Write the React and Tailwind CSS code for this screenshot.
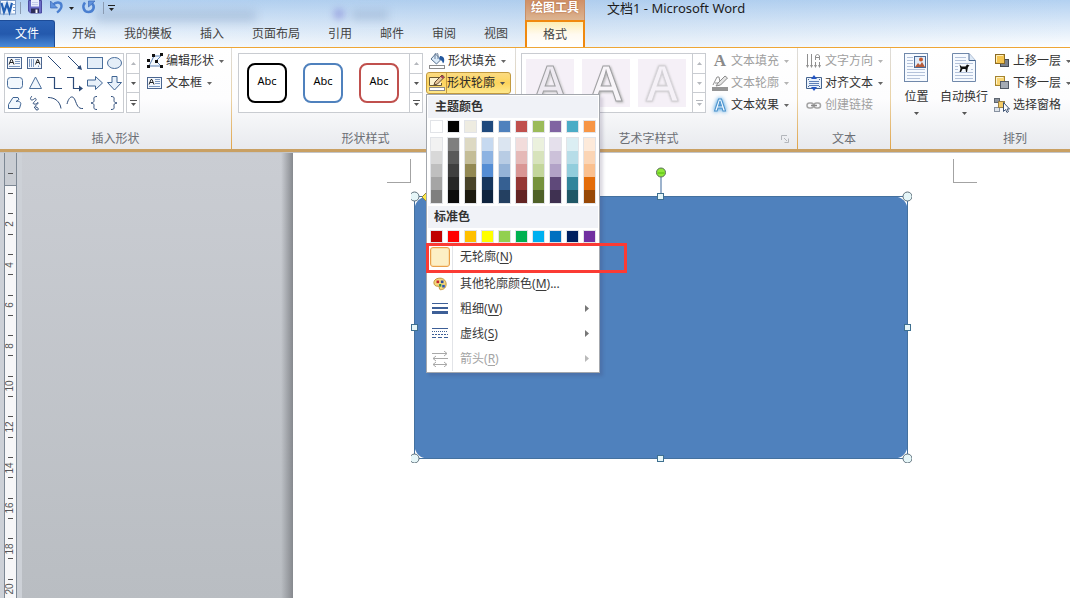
import React from "react";

const INK = "#2b4a78";

function Caret({ className = "text-[#555555]" }) {
  return (
    <svg viewBox="0 0 5 3" className={`h-[3px] w-[5px] shrink-0 ${className}`} aria-hidden="true">
      <path d="M0 0h5L2.500 3z" fill="currentColor" />
    </svg>
  );
}

function Icon({ size = "size-4", box = "0 0 16 16", children }) {
  return (
    <svg viewBox={box} className={`${size} shrink-0`} fill="none" aria-hidden="true">
      {children}
    </svg>
  );
}

/* ---------- title bar icons ---------- */

const WordLogo = () => (
  <Icon>
    <rect x=".5" y=".5" width="15" height="13.500" fill="#fbfdff" stroke="#7f9dc8" />
    <path d="M1 2h11v11H1z" fill="#dbe8f8" />
    <path d="M1.500 3l2.500 9L7 4l2.500 8L12 3" stroke="#2360b4" strokeWidth="2.200" />
    <path d="M13 4.500h2M13 7.500h2M13 10.500h2" stroke="#7ba0d0" />
  </Icon>
);

const SaveIcon = () => (
  <Icon>
    <path d="M1.500 .5h13V13h-11l-2-2z" fill="#6a6cc6" stroke="#4a4aa0" />
    <rect x="4" y="0" width="8" height="6.500" fill="#e9eefb" />
    <path d="M5 2.500h6M5 4.500h6" stroke="#c4cdea" />
    <rect x="4" y="8.500" width="8" height="4.500" fill="#2c2c58" />
    <rect x="8.500" y="9.500" width="2" height="3.500" fill="#fff" />
  </Icon>
);

const UndoIcon = () => (
  <Icon>
    <path d="M4 5C6.500 1.500 12.500 1.500 12.500 6c0 3-2 4.500-4.500 6.500" stroke="#4a7fd0" strokeWidth="2.400" />
    <path d="M1.500 1v7h7z" fill="#5f92de" stroke="#3a68b8" strokeWidth=".7" />
  </Icon>
);

const RedoIcon = () => (
  <Icon>
    <path d="M4 2.500C1 6 2.500 12 7.500 12c5.500 0 6.500-6 3.500-8.500" stroke="#4a7fd0" strokeWidth="2.600" />
    <path d="M7.500 7V1H14z" fill="#5f92de" stroke="#3a68b8" strokeWidth=".7" />
  </Icon>
);

/* ---------- shape gallery ---------- */

const shapes = [
  ["文本框", <g key="s"><rect x="3.500" y="4.500" width="14" height="11" fill="#f4f8fd" stroke="#4b6690" /><path d="M5 11.500l2-5h1l2 5M6 9.500h3" stroke="#222" /><path d="M11 6.500h5M11 8.500h5M11 10.500h5M5 13.500h11" stroke="#7c98c0" /></g>],
  ["竖排文本框", <g key="s"><rect x="3.500" y="4.500" width="14" height="11" fill="#f4f8fd" stroke="#4b6690" /><path d="M5.500 6v8M7.500 6v8M9.500 6v8M14.500 12.500V14" stroke="#7c98c0" /><path d="M11.500 11.500l2-5h.5l2 5M12 9.500h3" stroke="#222" /></g>],
  ["直线", <path key="s" d="M4 3l13 13" stroke={INK} />],
  ["箭头", <g key="s"><path d="M4 3l12 12" stroke={INK} /><path d="M18 17l-5-1.500 3.500-3.500z" fill={INK} /></g>],
  ["矩形", <rect key="s" x="3.500" y="4.500" width="15" height="11" fill="#e4eef8" stroke="#4b6f9c" />],
  ["椭圆", <ellipse key="s" cx="10.500" cy="10" rx="7" ry="5.500" fill="#e4eef8" stroke="#4b6f9c" />],
  ["圆角矩形", <rect key="s" x="3.500" y="4.500" width="15" height="11" rx="3" fill="#f1f7fd" stroke="#4b6f9c" />],
  ["三角形", <path key="s" d="M11.500 4L17.500 15.500h-12z" fill="#f1f7fd" stroke="#4b6f9c" />],
  ["肘形连接符", <path key="s" d="M3 4.500h7.500v11H18" stroke={INK} strokeWidth="1.200" />],
  ["肘形箭头连接符", <g key="s"><path d="M3 4.500h6.500v11H16" stroke={INK} strokeWidth="1.200" /><path d="M15 12.500l4 3-4 3z" fill={INK} /></g>],
  ["右箭头", <path key="s" d="M3.500 7h8V3.500l7 6.500-7 6.500V13h-8z" fill="#e8f1fa" stroke="#3f6493" />],
  ["下箭头", <path key="s" d="M8 3.500h5v6h4.500L10.500 17 3.500 9.500H8z" fill="#e8f1fa" stroke="#3f6493" />],
  ["任意多边形", <path key="s" d="M9 4.500h5l1 2-3 2c4-.5 5.500 1 4.500 3.500l-1 3.500h-11v-4z" fill="#f1f7fd" stroke="#3f6493" />],
  ["自由曲线", <path key="s" d="M8 3c-2 2-2 4 0 4s3-3 4-1-5 4-2 5 4-3 4-1-5 3-2 4 3 3 1 3-1-2-3-3" stroke={INK} />],
  ["弧形", <path key="s" d="M4 4.500c7 0 12 4 13 11" stroke={INK} />],
  ["曲线", <path key="s" d="M3 11c2-8 6-9 8-4s3 9 8 8.500" stroke={INK} />],
  ["左大括号", <path key="s" d="M13 3.500c-4 0-3 2-3 4 0 1.500-1 2.500-3 2.500 2 0 3 1 3 2.500 0 2-1 4 3 4" stroke={INK} />],
  ["右大括号", <path key="s" d="M7 3.500c4 0 3 2 3 4 0 1.500 1 2.500 3 2.500-2 0-3 1-3 2.500 0 2 1 4-3 4" stroke={INK} />],
];

/* ---------- ribbon icons ---------- */

const EditShapeIcon = () => (
  <Icon>
    <path d="M7 3h7l-5 5 5 5H2z" fill="#f3f8fd" stroke="#5b80b4" />
    <path d="M0 12h3v3H0zM5 1h3v3H5zM13 0h3v3h-3zM8 7h3v3H8zM13 12h3v3h-3zM0 6h3v3H0z" fill="#111" />
  </Icon>
);
const TextBoxIcon = () => (
  <Icon>
    <rect x=".5" y="2.500" width="14" height="11" fill="#f4f8fd" stroke="#4b6690" />
    <path d="M2 9.500l2-5h1l2 5M3 7.500h3" stroke="#222" />
    <path d="M8 4.500h5M8 6.500h5M8 8.500h5M2 11.500h11" stroke="#7c98c0" />
  </Icon>
);
const FillIcon = () => (
  <Icon>
    <path d="M6.500 1L12 6.500 7.500 11 2 6z" fill="#dcebf9" stroke="#58718e" />
    <path d="M6 6V1.500Q6 0 7.500 0T9 2v4" stroke="#677d98" />
    <path d="M11 3c3 0 5 2 4 6l-1 1.500c-1-3-2-4-4-4z" fill="#23589f" />
    <rect x=".5" y="12.500" width="15" height="3" fill="#fff" stroke="#8c8c8c" />
  </Icon>
);
const OutlineIcon = () => (
  <Icon>
    <path d="M10 2.500H.5v8h12V8" fill="#fdf3cf" stroke="#6b5a35" />
    <path d="M5 10l1-3 7-7 2.500 2-7 7z" fill="#e7c79a" stroke="#5e4930" />
    <path d="M12 1l2.500 2" stroke="#a73f55" strokeWidth="2" />
    <rect x=".5" y="12.500" width="15" height="3" fill="#fff" stroke="#8c8c8c" />
  </Icon>
);
const TextFillIcon = () => (
  <span className="w-4 shrink-0 text-center font-['Liberation_Serif',serif] text-[17px] leading-4 font-bold text-[#8a8a8a]">A</span>
);
const TextOutlineIcon = () => (
  <Icon>
    <path d="M1 10l4-8h2l1 5M3 8h4" stroke="#909090" />
    <path d="M4 11l2-3 7-7 2.500 2-7 7z" fill="#e4e4e4" stroke="#8a8a8a" />
    <rect x="0" y="12" width="16" height="4" fill="#949494" />
  </Icon>
);
const TextEffectIcon = () => (
  <span className="w-4 shrink-0 text-center text-[16px] leading-4 font-bold text-[#eef7ff] drop-shadow-[0_0_2px_#2d93dd] [-webkit-text-stroke:1px_#4b92cb]">A</span>
);
const DirectionIcon = () => (
  <Icon>
    <path d="M1.500 1v11M5.500 1v11M9.500 7V3l2-2 2 2v4M9.500 4.500h4M9.500 9v5M13.500 9v5" stroke="#8f8f8f" />
    <path d="M0 12h3l-1.500 3zM4 12h3l-1.500 3zM8 12h3l-1.500 3zM12 12h3l-1.500 3z" fill="#8f8f8f" />
  </Icon>
);
const AlignIcon = () => (
  <Icon>
    <path d="M.5 2.500h15v11H.5z" fill="#e9f1fb" stroke="#46648f" />
    <path d="M2 4.500h1M2 11.500h1M13 4.500h1M13 11.500h1" stroke="#46648f" />
    <path d="M3 6.500h10M3 8.500h10M3 10.500h10" stroke="#5d80b8" />
    <path d="M5 4L8 0l3 4zM5 12L8 16l3-4z" fill="#2456c4" />
  </Icon>
);
const LinkIcon = () => (
  <Icon>
    <rect x="1" y="6" width="6.500" height="5" rx="2.500" stroke="#a5a5a5" strokeWidth="1.500" />
    <rect x="8" y="6" width="6.500" height="5" rx="2.500" stroke="#a5a5a5" strokeWidth="1.500" />
    <path d="M5 8.500h6" stroke="#8a8a8a" strokeWidth="1.500" />
  </Icon>
);
const ForwardIcon = () => (
  <Icon>
    <rect x="6.500" y="6.500" width="8" height="7" fill="#7b828d" stroke="#454b55" />
    <rect x="1.500" y="1.500" width="9" height="9" fill="#f5c551" stroke="#8a6a25" />
    <path d="M2.500 9V2.500H9" stroke="#fff0bd" />
  </Icon>
);
const BackwardIcon = () => (
  <Icon>
    <rect x="1.500" y="1.500" width="9" height="9" fill="#f8d576" stroke="#a5842f" />
    <path d="M2.500 9V2.500H9" stroke="#fff4cf" />
    <rect x="6.500" y="6.500" width="8" height="7" fill="#a5abb4" stroke="#525964" />
  </Icon>
);
const SelectPaneIcon = () => (
  <Icon>
    <rect x=".5" y="1.500" width="5" height="4" fill="#8d949e" stroke="#5f6670" />
    <rect x=".5" y="10.500" width="5" height="4" fill="#dfe4ea" stroke="#8791a0" />
    <rect x="4.500" y="4.500" width="6" height="6" fill="#f5cc68" stroke="#9c8142" />
    <path d="M9.500 5.500v9l2-2 1.500 3 1.500-1-1.500-2.500h2.500z" fill="#fff" stroke="#3c5273" />
  </Icon>
);
const PositionIcon = () => (
  <Icon size="h-[30px] w-[25px]" box="0 0 25 30">
    <rect x=".5" y=".5" width="23" height="28" fill="#f6faff" stroke="#7088aa" />
    <path d="M3 4.500h6M3 7.500h6M3 10.500h6M3 13.500h6M3 16.500h18M3 19.500h18M3 22.500h18M3 25.500h13" stroke="#b4c2da" />
    <rect x="10.500" y="3.500" width="11" height="11" fill="#e1ecf9" stroke="#4c6a96" />
    <circle cx="17" cy="6.500" r="2" fill="#c5582c" />
    <path d="M11 14l3-4 2 2 2-3 3 5z" fill="#b65c3b" />
  </Icon>
);
const WrapIcon = () => (
  <Icon size="h-[30px] w-[25px]" box="0 0 25 30">
    <path d="M.5.500H17l6.500 7v21H.5z" fill="#f6faff" stroke="#7088aa" />
    <path d="M17 .500v7h6.500" fill="#dce8f6" stroke="#46658f" />
    <path d="M3 4.500h11M3 7.500h11M3 10.500h18M3 13.500h3M3 16.500h3M3 19.500h18M3 22.500h18M3 25.500h18M19 16.500h2" stroke="#b4c2da" />
    <path d="M7.500 11.500l2 2h4l1.500-2 2.500 1-1.500 1.500-1 5h-1l-.5-3h-3L9 19H7.500l1-3.500z" fill="#111" />
  </Icon>
);

/* ---------- ribbon building blocks ---------- */

function Group({ label, launcher, width, last, children }) {
  return (
    <section className={`flex shrink-0 flex-col ${width}`}>
      <div className="flex flex-1">
        <div className="flex min-w-0 flex-1 flex-col">
          <div className="flex h-20">{children}</div>
          <div className="flex h-[21px] items-center text-[#6c6f75]">
            <h2 className="flex-1 text-center">{label}</h2>
            {launcher && (
              <button type="button" aria-label={`${label}选项`} className="w-4">
                <Icon size="size-2" box="0 0 8 8">
                  <path d="M.5 5V.500H6M3 3l3 3M7.500 3.500v4h-4" stroke="#b3b6bb" />
                </Icon>
              </button>
            )}
          </div>
        </div>
        {!last && <div className="w-px bg-linear-to-b from-[#dcdcdc] via-[#ead3a6] to-[#e0a446]" />}
      </div>
    </section>
  );
}

function RibbonButton({ icon, label, caret = true, disabled }) {
  return (
    <button type="button" disabled={disabled} className={`flex h-[22px] items-center whitespace-nowrap ${disabled ? "text-[#9f9f9f]" : "text-[#333333]"}`}>
      {icon}
      <span className="ml-[3px]">{label}</span>
      {caret && <Caret className={disabled ? "ml-[5px] text-[#b4b4b4]" : "ml-[5px] text-[#666666]"} />}
    </button>
  );
}

function GalleryScroll({ faded }) {
  const tone = faded ? "text-[#b5b8bd]" : "text-[#555555]";
  return (
    <div className="flex w-[14px] flex-col divide-y divide-[#c9ccd1] border border-[#c9ccd1] bg-white">
      <button type="button" aria-label="上一行" className="flex flex-1 items-center justify-center">
        <Caret className="rotate-180 text-[#b5b8bd]" />
      </button>
      <button type="button" aria-label="下一行" className="flex flex-1 items-center justify-center">
        <Caret className={tone} />
      </button>
      <button type="button" aria-label="其他" className={`flex flex-1 flex-col items-center justify-center gap-0.5 ${tone}`}>
        <span className="h-px w-[7px] bg-current" />
        <Caret className={tone} />
      </button>
    </div>
  );
}

/* ---------- outline menu ---------- */

const themeColors = [
  ["bg-[#ffffff]", ["bg-[#f2f2f2]", "bg-[#d8d8d8]", "bg-[#bfbfbf]", "bg-[#a5a5a5]", "bg-[#7f7f7f]"]],
  ["bg-[#000000]", ["bg-[#7f7f7f]", "bg-[#595959]", "bg-[#3f3f3f]", "bg-[#262626]", "bg-[#0c0c0c]"]],
  ["bg-[#eeece1]", ["bg-[#ddd9c3]", "bg-[#c4bd97]", "bg-[#938953]", "bg-[#494429]", "bg-[#1d1b10]"]],
  ["bg-[#1f497d]", ["bg-[#c6d9f0]", "bg-[#8db3e2]", "bg-[#548dd4]", "bg-[#17365d]", "bg-[#0f243e]"]],
  ["bg-[#4f81bd]", ["bg-[#dbe5f1]", "bg-[#b8cce4]", "bg-[#95b3d7]", "bg-[#366092]", "bg-[#244061]"]],
  ["bg-[#c0504d]", ["bg-[#f2dcdb]", "bg-[#e5b9b7]", "bg-[#d99694]", "bg-[#953734]", "bg-[#632423]"]],
  ["bg-[#9bbb59]", ["bg-[#ebf1dd]", "bg-[#d7e3bc]", "bg-[#c3d69b]", "bg-[#76923c]", "bg-[#4f6128]"]],
  ["bg-[#8064a2]", ["bg-[#e5e0ec]", "bg-[#ccc1d9]", "bg-[#b2a2c7]", "bg-[#5f497a]", "bg-[#3f3151]"]],
  ["bg-[#4bacc6]", ["bg-[#dbeef3]", "bg-[#b7dde8]", "bg-[#92cddc]", "bg-[#31859b]", "bg-[#205867]"]],
  ["bg-[#f79646]", ["bg-[#fdeada]", "bg-[#fbd5b5]", "bg-[#fac08f]", "bg-[#e36c09]", "bg-[#974806]"]],
];
const standardColors = ["bg-[#c00000]", "bg-[#ff0000]", "bg-[#ffc000]", "bg-[#ffff00]", "bg-[#92d050]", "bg-[#00b050]", "bg-[#00b0f0]", "bg-[#0070c0]", "bg-[#002060]", "bg-[#7030a0]"];

const PaletteIcon = () => (
  <Icon size="size-[14px]">
    <path d="M6 1.500c5-1 9 2 9 6.500 0 4.500-3 6.500-6.500 6.500C6.500 14.500 8 11 6 10.500 3 11 1 9 1 6.500S3 2 6 1.500z" fill="#f5d77c" stroke="#b98a2c" />
    <path d="M4 4h3v3H4z" fill="#c5232e" />
    <path d="M9 4h3v3H9z" fill="#2c4c9e" />
    <path d="M7 8h2.500v3H7z" fill="#2a8e45" />
    <path d="M10.500 9h3v3h-3z" fill="#2f55b5" />
  </Icon>
);
const WeightIcon = () => (
  <Icon>
    <path d="M0 2.500h16" stroke="#3d5f97" />
    <path d="M0 7h16" stroke="#3d5f97" strokeWidth="2" />
    <path d="M0 11.500h16" stroke="#3d5f97" strokeWidth="3" />
  </Icon>
);
const DashIcon = () => (
  <Icon>
    <path d="M0 2.500h16" stroke="#3d5f97" />
    <path d="M0 5.500h16" stroke="#3d5f97" strokeDasharray="1 1" />
    <path d="M0 8.500h16" stroke="#3d5f97" strokeDasharray="2 1" />
    <path d="M0 11.500h16" stroke="#3d5f97" strokeDasharray="4 2" />
  </Icon>
);
const ArrowsIcon = () => (
  <Icon>
    <path d="M0 2.500h15M12 0l3 2.500L12 5M16 7.500H1M4 5L1 7.500 4 10M1 13.500h14M4 11l-3 2.500L4 16M12 11l3 2.500-3 2.500" stroke="#a8a8a8" />
  </Icon>
);

function MenuItem({ icon, text, accel, tail = "", sub, disabled, height = "h-[25px]" }) {
  return (
    <button type="button" role="menuitem" disabled={disabled} className={`flex w-full ${height} items-stretch text-left ${disabled ? "text-[#a4a4a4]" : "text-[#3a3a3a]"}`}>
      <span className="flex w-[25px] shrink-0 items-center justify-center border-r border-[#e2e4e8]">{icon}</span>
      <span className="flex flex-1 items-center pl-[7px]">
        <span>{text}(<u className="underline-offset-2">{accel}</u>){tail}</span>
      </span>
      {sub && (
        <svg viewBox="0 0 4 7" className="mr-[9px] h-[7px] w-1 self-center" aria-hidden="true">
          <path d="M0 0l4 3.500L0 7z" fill={disabled ? "#b9b9b9" : "#777777"} />
        </svg>
      )}
    </button>
  );
}

function OutlineMenu() {
  return (
    <div role="menu" aria-label="形状轮廓" className="absolute top-full left-0 z-20 w-[174px] border border-[#a3a7ad] bg-white p-px text-[#333333] shadow-[3px_3px_3px_rgba(60,50,90,0.18)]">
      <h3 className="flex h-[22px] items-center bg-[#f0f2f7] pl-[7px] font-bold">主题颜色</h3>
      <div className="mt-0.5 flex gap-1 pl-0.5">
        {themeColors.map(([base, shades], i) => (
          <div key={base} className="flex flex-col gap-1">
            <button type="button" aria-label={`主题颜色 ${i + 1}`} className={`size-[13px] border border-[#e2e4e8] ${base}`} />
            <div className="flex flex-col border border-[#e2e4e8]">
              {shades.map((shade, j) => (
                <button key={shade} type="button" aria-label={`主题颜色 ${i + 1} 深浅 ${j + 1}`} className={`h-[13px] w-[11px] ${shade}`} />
              ))}
            </div>
          </div>
        ))}
      </div>
      <h3 className="mt-0.5 flex h-[22px] items-center bg-[#f0f2f7] pl-[6px] font-bold">标准色</h3>
      <div className="mt-0.5 flex gap-1 pl-0.5">
        {standardColors.map((color, i) => (
          <button key={color} type="button" aria-label={`标准色 ${i + 1}`} className={`size-[13px] border border-[#e2e4e8] ${color}`} />
        ))}
      </div>
      <div className="relative mt-px">
        <MenuItem
          height="h-[26px]"
          text="无轮廓"
          accel="N"
          icon={<span className="size-5 rounded-[3px] border border-[#e9a04a] bg-[#fcefc5] ring-1 ring-[#fbdfa8] ring-inset" />}
        />
        <div className="ml-[25px] h-px bg-[#e2e4e8]" />
        <div className="pointer-events-none absolute -top-px -left-0.5 h-[30px] w-[201px] border-[3px] border-[#fb3b34]" />
      </div>
      <MenuItem icon={<PaletteIcon />} text="其他轮廓颜色" accel="M" tail="..." />
      <MenuItem icon={<WeightIcon />} text="粗细" accel="W" sub />
      <MenuItem icon={<DashIcon />} text="虚线" accel="S" sub />
      <MenuItem icon={<ArrowsIcon />} text="箭头" accel="R" sub disabled />
    </div>
  );
}

/* ---------- page regions ---------- */

const tabs = ["开始", "我的模板", "插入", "页面布局", "引用", "邮件", "审阅", "视图"];

function Header() {
  return (
    <header className="relative overflow-hidden border-b border-[#eea636] bg-linear-to-b from-[#b3d1f1] via-[#d9e8f8] to-[#fdfeff]">
      <div aria-hidden="true" className="absolute inset-0 bg-linear-to-r from-transparent via-[#9dbde0]/20 to-transparent" />
      <div aria-hidden="true" className="absolute top-2.5 left-24 h-3 w-40 bg-[#7892b5]/30 blur-[5px]" />
      <div aria-hidden="true" className="absolute top-2 left-[333px] size-3 rounded-full bg-[#7474d0]/40 blur-[3px]" />
      <div aria-hidden="true" className="absolute top-2.5 left-[352px] h-2.5 w-9 bg-[#7892b5]/30 blur-[4px]" />
      <div className="relative flex h-5">
        <div className="flex h-4 shrink-0 basis-[525px] items-center">
          <WordLogo />
          <span className="ml-1 h-3 w-px bg-[#8a9bb2]" />
          <button type="button" aria-label="保存" className="ml-1.5"><SaveIcon /></button>
          <button type="button" aria-label="撤消" className="ml-1.5"><UndoIcon /></button>
          <button type="button" aria-label="撤消列表" className="ml-1 flex w-2 items-center"><Caret className="text-[#222222]" /></button>
          <button type="button" aria-label="重复" className="ml-1"><RedoIcon /></button>
          <span className="ml-1.5 h-3 w-px bg-[#8a9bb2]" />
          <button type="button" aria-label="自定义快速访问工具栏" className="ml-1 flex flex-col items-center gap-0.5 text-[#222222]">
            <span className="h-px w-[7px] bg-current" />
            <Caret className="text-[#222222]" />
          </button>
        </div>
        <div className="flex w-[60px] shrink-0 items-start justify-center border-x border-[#c88f66] bg-linear-to-b from-[#cf8f66] to-[#dcb491] font-bold leading-4 text-white [text-shadow:0_0_2px_#a4562a]">绘图工具</div>
        <h1 className="pl-[22px] text-[13px] leading-4 whitespace-pre text-[#1c1c1c]">文档1 - Microsoft Word</h1>
      </div>
      <nav aria-label="功能区选项卡" className="relative flex h-[27px] text-[#444444]">
        <button type="button" className="mr-[3px] w-[55px] rounded-tr-[3px] border-t border-r border-[#1d4c98] bg-linear-to-b from-[#2b63b7] via-[#2459ad] to-[#4b8ad8] text-white">文件</button>
        {tabs.map((tab) => (
          <button key={tab} type="button" className="px-3.5 whitespace-nowrap">{tab}</button>
        ))}
        <button type="button" aria-current="true" className="ml-[3px] w-[60px] border-2 border-b-0 border-[#f0890f] bg-linear-to-b from-[#fdeeb4] via-[#fffaf0] to-white">格式</button>
      </nav>
    </header>
  );
}

function Ribbon() {
  return (
    <div className="relative z-10 flex border-b-[3px] border-[#c9a063] bg-linear-to-b from-white via-[#fdfdfe] to-[#e8eaee]">
      <Group label="插入形状" width="w-[232px]">
        <div className="mt-[5px] ml-1 flex h-[60px]">
          <div className="grid grid-cols-6 bg-white ring-1 ring-[#c9ccd1] ring-inset">
            {shapes.map(([name, art]) => (
              <button key={name} type="button" aria-label={name} className="size-5">
                <Icon size="size-5" box="0 0 20 20">{art}</Icon>
              </button>
            ))}
          </div>
          <div className="flex w-4 justify-end bg-white"><GalleryScroll /></div>
        </div>
        <div className="mt-0.5 ml-[7px] flex flex-col">
          <RibbonButton icon={<EditShapeIcon />} label="编辑形状" />
          <RibbonButton icon={<TextBoxIcon />} label="文本框" />
        </div>
      </Group>

      <Group label="形状样式" launcher width="w-[284px]">
        <div className="mt-[5px] ml-1.5 flex h-[60px]">
          <div className="flex w-[171px] items-center gap-4 border border-r-0 border-[#c9ccd1] bg-white pl-2">
            {["border-black", "border-[#4f81bd]", "border-[#c0504d]"].map((edge) => (
              <button key={edge} type="button" className={`size-10 rounded-lg border-2 bg-white pb-1 text-[11px] text-black ${edge}`}>Abc</button>
            ))}
          </div>
          <GalleryScroll />
        </div>
        <div className="mt-0.5 ml-[3px] flex flex-col">
          <div className="pl-[3px]"><RibbonButton icon={<FillIcon />} label="形状填充" /></div>
          <div className="relative">
            <button type="button" aria-haspopup="menu" aria-expanded="true" className="flex h-[22px] w-[85px] items-center rounded-[3px] border border-[#c29a3f] bg-linear-to-b from-[#fbdb82] via-[#fdd45c] to-[#fee88c] whitespace-nowrap text-[#2a2a2a]">
              <span className="flex h-full w-[20px] items-center justify-center border-r border-[#c29a3f]"><OutlineIcon /></span>
              <span>形状轮廓</span>
              <Caret className="ml-[5px] text-[#555555]" />
            </button>
            <OutlineMenu />
          </div>
        </div>
      </Group>

      <Group label="艺术字样式" launcher width="w-[282px]">
        <div className="mt-[5px] ml-[5px] flex h-[60px]">
          <div className="flex w-[171px] items-center gap-2 border border-r-0 border-[#c9ccd1] bg-white pl-1">
            {[
              "[-webkit-text-stroke:1px_#a0a0a3] text-[#eeeaf1] drop-shadow-[1px_1px_1px_#c4c4c4]",
              "[-webkit-text-stroke:1px_#a0a0a3] text-[#f8f5f9] drop-shadow-[1px_1px_1px_#b0b0b0]",
              "[-webkit-text-stroke:1px_#d6d3d9] text-[#f5f1f7] drop-shadow-[0_0_1px_#bbbbbb]",
            ].map((look) => (
              <button key={look} type="button" className="flex size-12 items-center justify-center bg-[#f5f0f7]">
                <span className={`font-['Open_Sans',sans-serif] text-[48px] leading-[48px] font-semibold ${look}`}>A</span>
              </button>
            ))}
          </div>
          <GalleryScroll faded />
        </div>
        <div className="mt-0.5 ml-1.5 flex flex-col">
          <RibbonButton icon={<TextFillIcon />} label="文本填充" disabled />
          <RibbonButton icon={<TextOutlineIcon />} label="文本轮廓" disabled />
          <RibbonButton icon={<TextEffectIcon />} label="文本效果" />
        </div>
      </Group>

      <Group label="文本" width="w-[93px]">
        <div className="mt-0.5 ml-2 flex flex-col">
          <RibbonButton icon={<DirectionIcon />} label="文字方向" disabled />
          <RibbonButton icon={<AlignIcon />} label="对齐文本" />
          <RibbonButton icon={<LinkIcon />} label="创建链接" caret={false} disabled />
        </div>
      </Group>

      <Group label="排列" width="w-[248px]" last>
        <div className="mt-[5px] ml-[13px] flex items-start gap-[11px] text-[#333333]">
          <button type="button" className="flex flex-col items-center whitespace-nowrap">
            <PositionIcon />
            <span className="mt-[5px] leading-[18px]">位置</span>
            <Caret className="mt-1.5 text-[#555555]" />
          </button>
          <button type="button" className="flex flex-col items-center whitespace-nowrap">
            <WrapIcon />
            <span className="mt-[5px] leading-[18px]">自动换行</span>
            <Caret className="mt-1.5 text-[#555555]" />
          </button>
        </div>
        <div className="mt-0.5 ml-1.5 flex flex-col">
          <RibbonButton icon={<ForwardIcon />} label="上移一层" />
          <RibbonButton icon={<BackwardIcon />} label="下移一层" />
          <RibbonButton icon={<SelectPaneIcon />} label="选择窗格" caret={false} />
        </div>
      </Group>
    </div>
  );
}

function Ruler() {
  const pitch = 20.3;
  const marks = Array.from({ length: 22 }, (_, i) => i);
  return (
    <svg className="h-full w-[13px] shrink-0" aria-label="垂直标尺">
      <rect width="13" height="100%" fill="#f7f7f8" />
      <rect width="13" height="32" fill="#c9cdd3" />
      <path d="M0 32.500h13" stroke="#7d8894" />
      <path d="M4 20.500h5" stroke="#555555" />
      {marks.map((n) => (
        <path key={n} d={`M4 ${Math.round(n * pitch) + 40}.500h5`} stroke="#555555" />
      ))}
      {marks.slice(1, 11).map((n) => {
        const y = Math.round((n - 1) * pitch * 2) + 71;
        return (
          <text key={n} x="6" y={y} transform={`rotate(-90 6 ${y})`} dy="3" textAnchor="middle" fontSize="10" fill="#555555" className="font-['Liberation_Sans',sans-serif]">{n * 2}</text>
        );
      })}
      <path d="M.5 0v1000M12.500 0v1000" stroke="#7d8894" />
    </svg>
  );
}

function DrawnShape() {
  const corners = [[4, 4], [497, 4], [4, 266], [497, 266]];
  const sides = [[250, 4], [4, 135], [497, 135], [250, 266]];
  return (
    <svg viewBox="0 0 501 300" className="absolute top-[10px] left-[118px] h-[300px] w-[501px]" fill="none" role="img" aria-label="圆角矩形">
      <g transform="translate(0 30)">
        <rect x="3.500" y="3.500" width="493" height="262" rx="13" fill="#4f81bd" />
        <path d="M3.500 3.500h493v262h-493z" stroke="#44719f" />
        <path d="M250 0v-16" stroke="#9db3cd" strokeWidth="2" />
        <circle cx="250" cy="-20.500" r="4.500" fill="#8ee83a" stroke="#5a6d58" />
        <path d="M246.500 -20h7" stroke="#6fd020" strokeWidth="2" />
        <path d="M15 0l4 4-4 4-4-4z" fill="#fbe94a" stroke="#98883d" />
        {corners.map(([x, y]) => (
          <circle key={`${x}-${y}`} cx={x - 0.5} cy={y - 0.5} r="4.500" fill="#e6f6f8" stroke="#5d6f7a" />
        ))}
        {sides.map(([x, y]) => (
          <rect key={`${x}-${y}`} x={x - 3.5} y={y - 3.5} width="6" height="6" fill="#e6f6f8" stroke="#3f7090" />
        ))}
      </g>
    </svg>
  );
}

export default function App() {
  return (
    <div className="flex h-screen flex-col overflow-hidden bg-white font-['Noto_Sans','Noto_Sans_CJK_SC',sans-serif] text-[12px] leading-[18px]">
      <Header />
      <Ribbon />
      <main className="flex min-h-0 flex-1 border-t border-[#c3c5c8] bg-[#cdd1d7]">
        <div className="ml-1"><Ruler /></div>
        <div className="ml-[5px] flex w-[271px] shrink-0 justify-end bg-linear-to-b from-[#cacdd3] to-[#b9bdc2]">
          <div className="w-3 bg-linear-to-r from-transparent to-[#86898e]" />
        </div>
        <div className="relative flex-1 overflow-hidden bg-white">
          <div aria-hidden="true" className="absolute top-[6px] left-[94px] h-6 w-6 border-r border-b border-[#a3a3a3]" />
          <div aria-hidden="true" className="absolute top-[6px] left-[660px] h-6 w-6 border-b border-l border-[#a3a3a3]" />
          <DrawnShape />
        </div>
      </main>
    </div>
  );
}
